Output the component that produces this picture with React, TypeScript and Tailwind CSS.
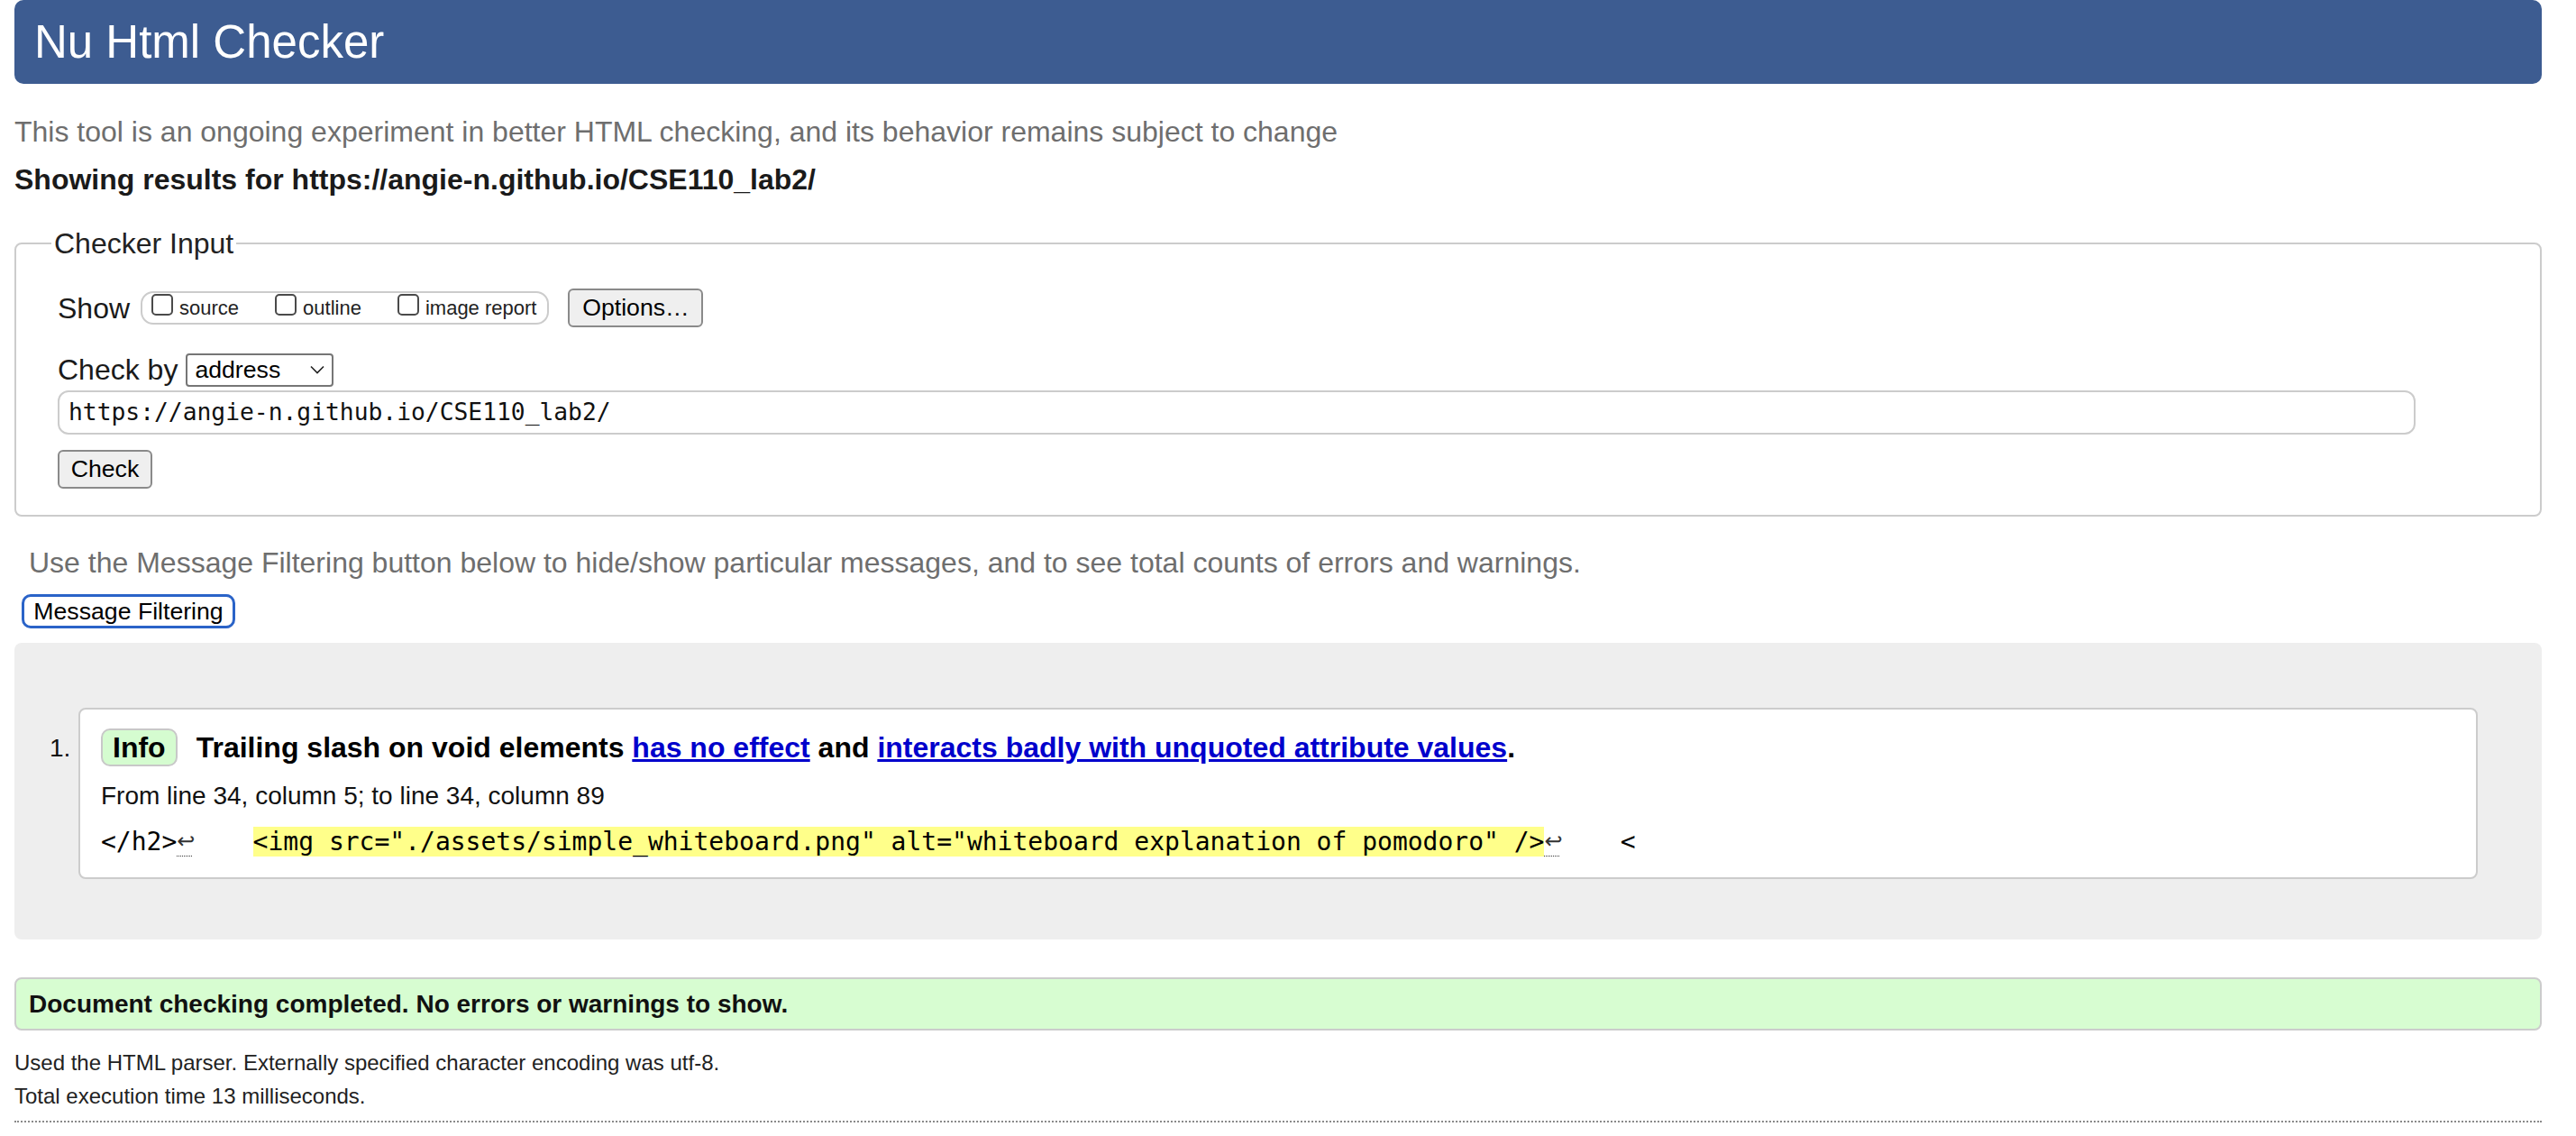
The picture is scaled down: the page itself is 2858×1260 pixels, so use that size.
import * as React from 'react';

const sans = 'font-[Liberation_Sans,Arial,sans-serif]';
const mono = 'font-[DejaVu_Sans_Mono,Liberation_Mono,monospace]';

function Checkbox({ label, first }: { label: string; first?: boolean }) {
  return (
    <div className={`flex items-center ${first ? '' : 'ml-[40px]'}`}>
      <span className="mb-[8px] h-[24px] w-[24px] rounded-[5px] border-2 border-[#4a4a4a] bg-white" />
      <span className="ml-[7px] text-[22px] leading-[24px] text-[#222]">{label}</span>
    </div>
  );
}

function Button({ children, className = '' }: { children: React.ReactNode; className?: string }) {
  return (
    <button
      className={`flex items-center justify-center rounded-[6px] border-2 border-[#8a8a8a] bg-[#efefef] text-[26.67px] leading-none text-black ${className}`}
    >
      {children}
    </button>
  );
}

function Return() {
  // the little "↩" marker with its dotted underline
  return (
    <span className="inline-block h-[33px] w-[16.86px] overflow-visible border-b border-dotted border-[#333] text-center align-top font-[DejaVu_Sans,sans-serif] text-[24px] leading-[33px] text-[#333]">
      ↩
    </span>
  );
}

function Message() {
  return (
    <div className="flex">
      <span className="mt-[29px] w-[32px] shrink-0 text-[28px] leading-[32px] text-[#111]">1.</span>
      <div className="flex-1 rounded-[8px] border-2 border-[#cccccc] bg-white pb-[23px] pl-[23px] pt-[21px]">
        <div className="flex h-[42px] items-center">
          <span className="flex h-[42px] items-center rounded-[10px] border-2 border-[#c8c8c8] bg-[#d5fcd0] px-[11px] text-[32px] font-bold leading-none text-black">
            Info
          </span>
          <span className="ml-[21px] text-[32px] font-bold leading-[36px] text-black">
            Trailing slash on void elements{' '}
            <a href="#" className="text-[#0000cc] underline">
              has no effect
            </a>{' '}
            and{' '}
            <a href="#" className="text-[#0000cc] underline">
              interacts badly with unquoted attribute values
            </a>
            .
          </span>
        </div>
        <p className="mt-[17px] text-[28px] leading-[32px] text-[#111]">
          From line 34, column 5; to line 34, column 89
        </p>
        <p className={`${mono} mt-[18px] whitespace-pre text-[28px] leading-[33px] text-black`}>
          {'</h2>'}
          <Return />
          {'    '}
          <span className="bg-[#ffff8a]">
            {'<img src="./assets/simple_whiteboard.png" alt="whiteboard explanation of pomodoro" />'}
          </span>
          <Return />
          {'    <'}
        </p>
      </div>
    </div>
  );
}

export default function App() {
  return (
    <div className={`${sans} min-h-[1260px] bg-white pl-[16px] pr-[38px] text-[#222]`}>
      <header className="flex h-[93px] items-center rounded-[10px] bg-[#3d5c91] pl-[22px]">
        <h1 className="text-[51px] font-normal leading-none text-white">Nu Html Checker</h1>
      </header>

      <p className="mt-[35px] text-[32px] leading-[36px] text-[#6e6e6e]">
        This tool is an ongoing experiment in better HTML checking, and its behavior remains subject to change
      </p>
      <p className="mt-[17px] text-[32px] font-bold leading-[36px] text-[#1a1a1a]">
        Showing results for https://angie-n.github.io/CSE110_lab2/
      </p>

      <fieldset className="mt-[35px] rounded-[8px] border-2 border-[#cccccc] pb-[29px] pl-[39px] pt-[32px]">
        <legend className="px-[3px] text-[32px] leading-[36px] text-[#222]">Checker Input</legend>
        <div className="pl-[7px]">
          <div className="flex h-[43px] items-center">
            <span className="text-[32px] leading-[36px] text-[#1a1a1a]">Show</span>
            <div className="ml-[12px] flex h-[37px] items-center rounded-[14px] border-2 border-[#cccccc] pl-[10px] pr-[12px]">
              <Checkbox label="source" first />
              <Checkbox label="outline" />
              <Checkbox label="image report" />
            </div>
            <Button className="ml-[21px] h-[43px] w-[150px]">Options…</Button>
          </div>

          <div className="mt-[29px] flex h-[36px] items-center">
            <span className="text-[32px] leading-[36px] text-[#1a1a1a]">Check by</span>
            <div className="ml-[9px] flex h-[37px] w-[164px] items-center justify-between rounded-[4px] border-2 border-[#767676] bg-white pl-[8px] pr-[8px]">
              <span className="text-[26.67px] leading-none text-black">address</span>
              <svg width="16" height="10" viewBox="0 0 16 10" fill="none">
                <polyline points="1,1.5 8,8.5 15,1.5" stroke="#222" strokeWidth="1.6" />
              </svg>
            </div>
          </div>

          <div
            className={`${mono} mt-[5px] flex h-[49px] w-[95%] items-center rounded-[12px] border-2 border-[#cccccc] px-[10px] text-[26.3px] text-[#111]`}
          >
            https://angie-n.github.io/CSE110_lab2/
          </div>

          <Button className="mt-[17px] h-[43px] w-[105px]">Check</Button>
        </div>
      </fieldset>

      <p className="mt-[33px] pl-[16px] text-[32px] leading-[36px] text-[#6e6e6e]">
        Use the Message Filtering button below to hide/show particular messages, and to see total counts of errors and
        warnings.
      </p>
      <button className="ml-[8px] mt-[17px] flex h-[38px] w-[237px] items-center justify-center rounded-[10px] border-[3px] border-[#2a63c8] bg-white text-[26.67px] leading-none text-black">
        Message Filtering
      </button>

      <div className="mt-[16px] rounded-[8px] bg-[#eeeeee] pb-[67px] pl-[39px] pr-[71px] pt-[72px]">
        <Message />
      </div>

      <div className="mt-[42px] flex h-[59px] items-center rounded-[8px] border-2 border-[#cccccc] bg-[#d7fdd1] pl-[14px]">
        <span className="text-[28px] font-bold leading-none text-[#111]">
          Document checking completed. No errors or warnings to show.
        </span>
      </div>

      <p className="mt-[22px] text-[24px] leading-[28px] text-[#222]">
        Used the HTML parser. Externally specified character encoding was utf-8.
      </p>
      <p className="mt-[9px] text-[24px] leading-[28px] text-[#222]">Total execution time 13 milliseconds.</p>
      <hr className="mt-[13px] border-0 border-t-2 border-dotted border-[#8a8a8a]" />
    </div>
  );
}
